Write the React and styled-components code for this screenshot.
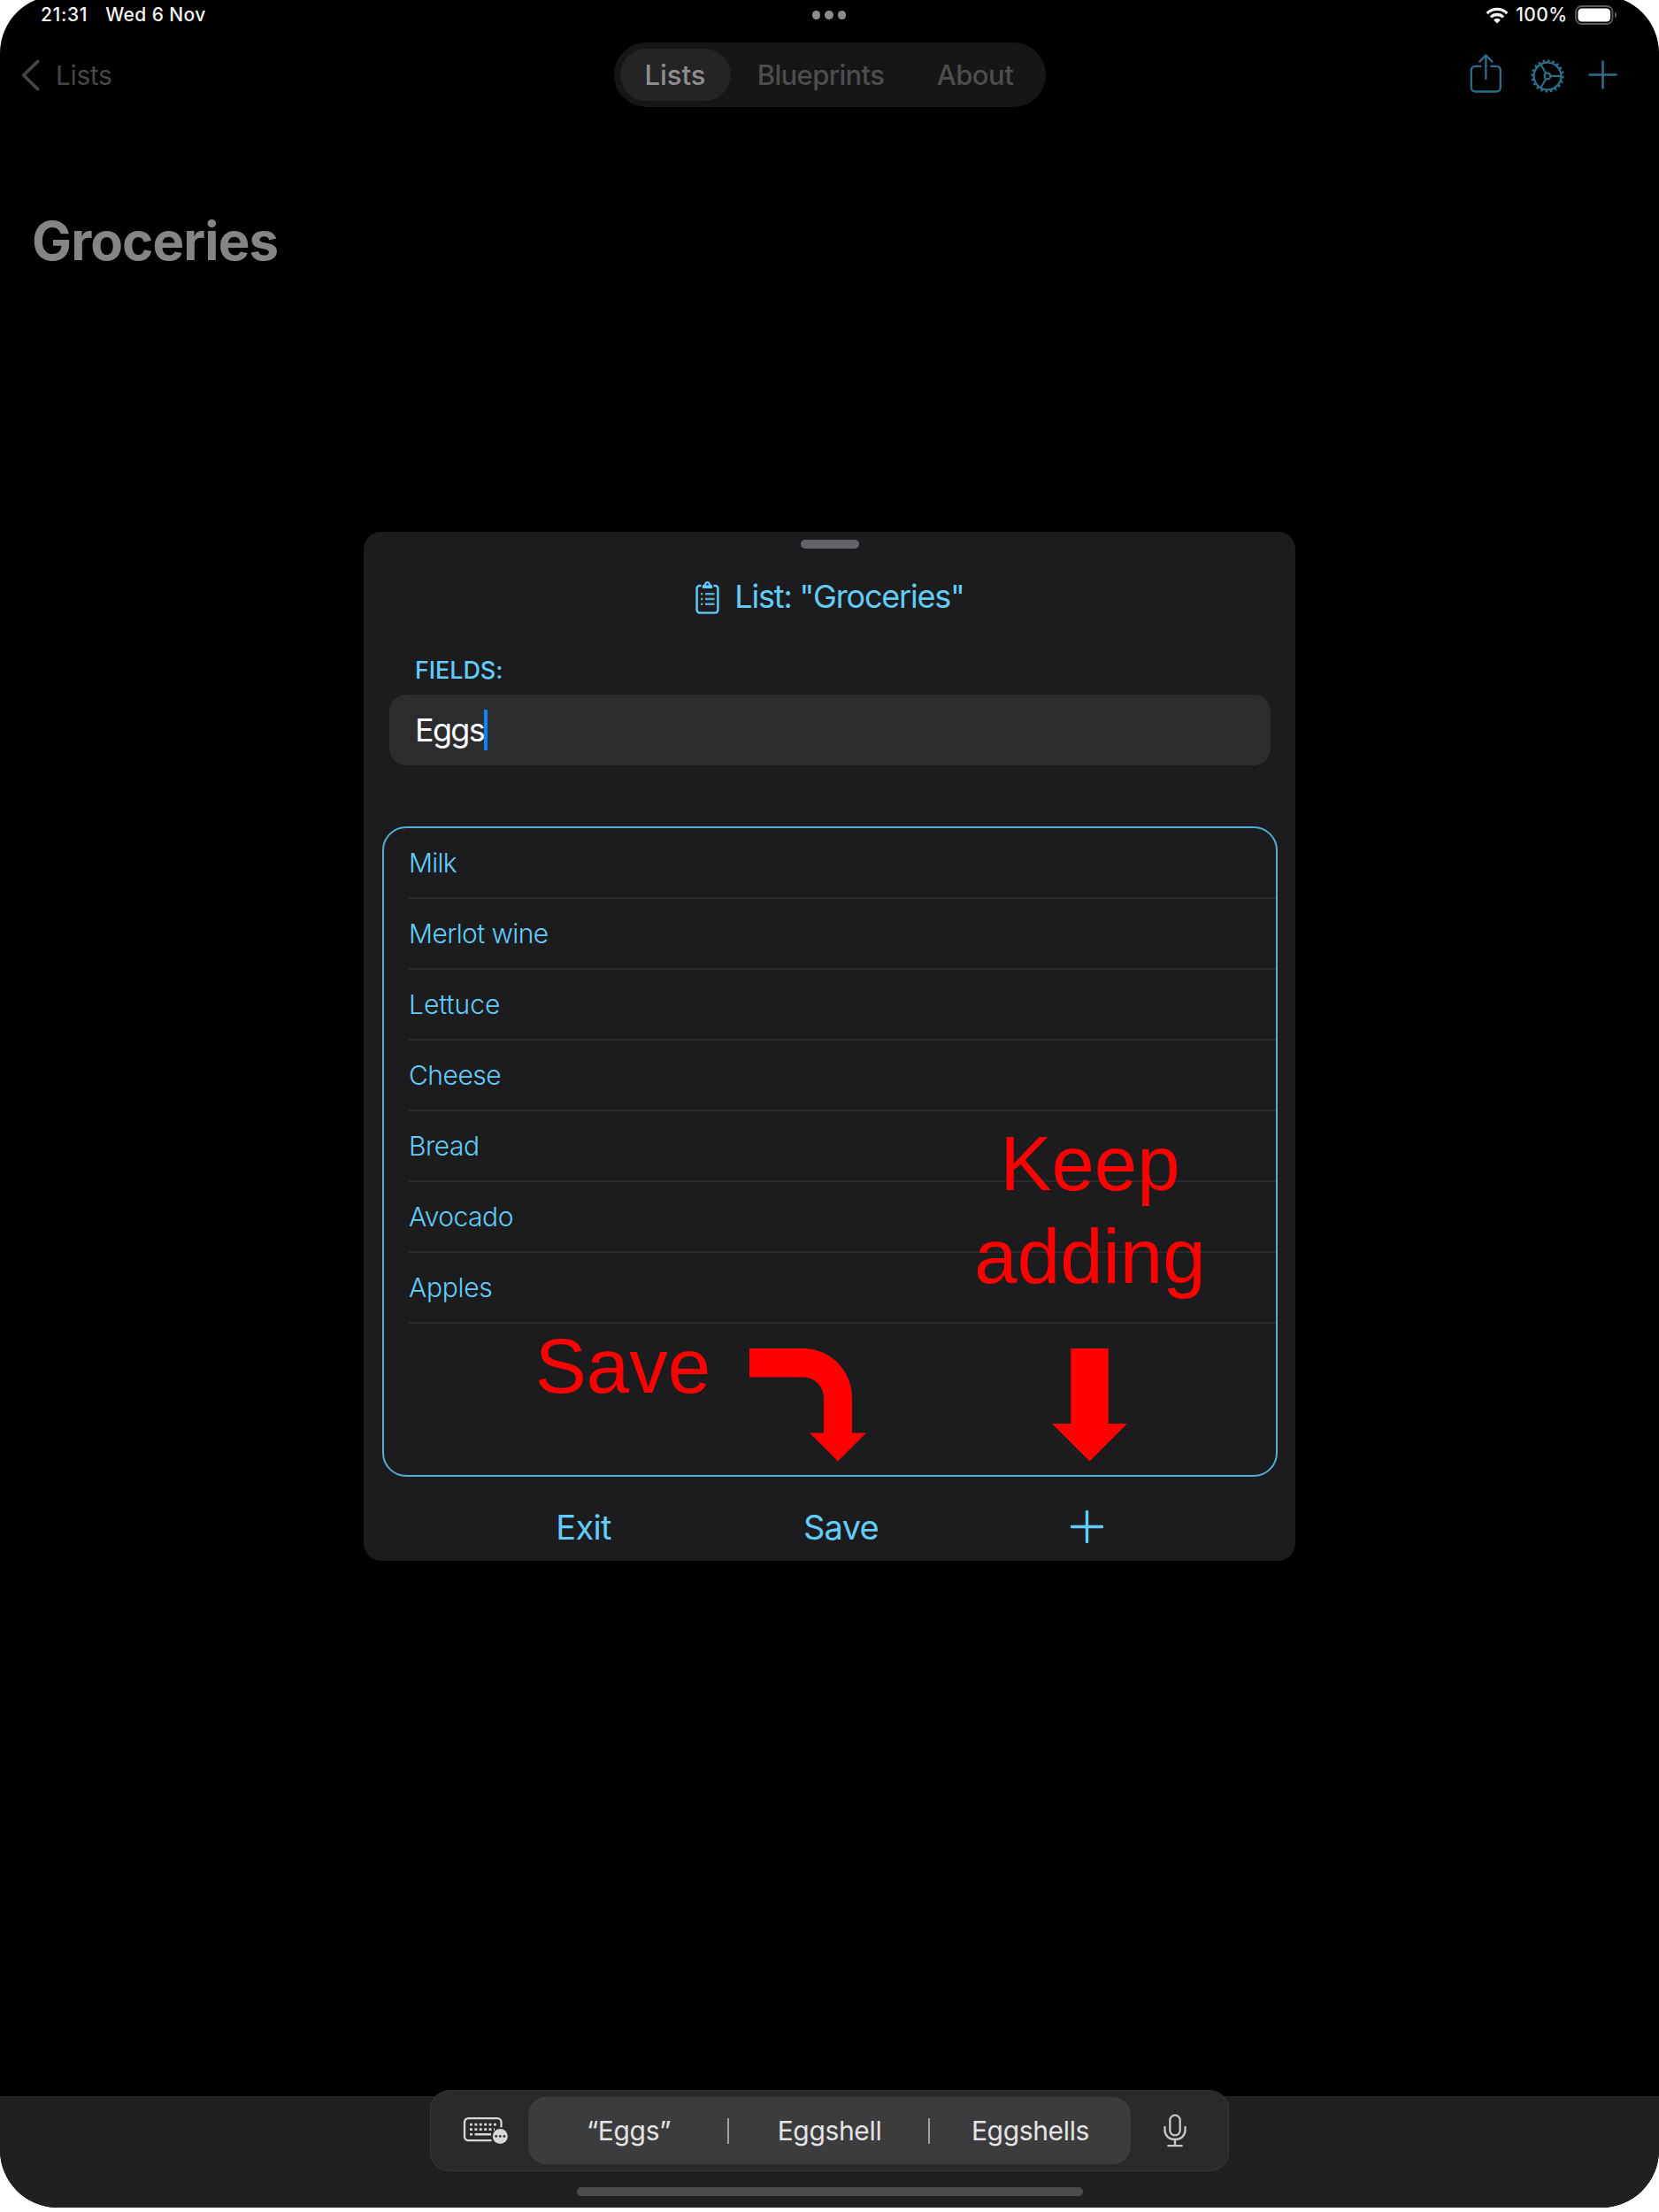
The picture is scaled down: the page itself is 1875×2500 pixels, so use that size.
import React from "react";
import styled, { createGlobalStyle } from "styled-components";

const CYAN = "#62cdfa";
const DIM_CYAN = "#2f6d88";

const GlobalStyle = createGlobalStyle`
  *, *::before, *::after { box-sizing: border-box; }
  body {
    margin: 0;
    background: #fff;
    font-family: Inter, Roboto, sans-serif;
  }
`;

const Page = styled.div`
  width: 1875px;
  height: 2500px;
  overflow: hidden;
  background: #fff;
`;

const Device = styled.div`
  width: 1875px;
  height: 2500px;
  margin-top: -5px;
  padding-top: 5px;
  border-radius: 65px;
  overflow: hidden;
  background: #000;
  display: flex;
  flex-direction: column;
`;

const StatusBar = styled.div`
  display: grid;
  grid-template-columns: 1fr auto 1fr;
  align-items: center;
  height: 34px;
  padding: 0 47.5px 0 46px;
`;

const StatusGroup = styled.div`
  display: flex;
  align-items: center;
  justify-content: ${(p) => (p.$end ? "flex-end" : "flex-start")};
  gap: ${(p) => p.$gap}px;
`;

const StatusText = styled.span`
  font-size: 21px;
  font-weight: 500;
  line-height: 26px;
  letter-spacing: ${(p) => p.$track || 0}px;
  color: #f4f4f4;
  white-space: nowrap;
`;

const Dots = styled.div`
  display: flex;
  gap: 5px;
`;

const Dot = styled.i`
  width: 9.5px;
  height: 9.5px;
  border-radius: 50%;
  background: #8c8c8c;
`;

const NavBar = styled.nav`
  display: grid;
  grid-template-columns: 1fr auto 1fr;
  align-items: center;
  height: 101px;
  padding: 0 23px;
`;

const BackLink = styled.div`
  display: flex;
  align-items: center;
  gap: 16px;
  font-size: 30px;
  line-height: 40px;
  letter-spacing: -0.4px;
  color: #464647;
`;

const Tabs = styled.div`
  display: flex;
  align-items: center;
  width: 488px;
  height: 73px;
  padding: 0 7px;
  border-radius: 37px;
  background: #161617;
`;

const Tab = styled.div`
  display: flex;
  align-items: center;
  justify-content: center;
  width: ${(p) => p.$width}px;
  height: 59px;
  border-radius: 30px;
  font-size: 31px;
  font-weight: 500;
  letter-spacing: ${(p) => p.$track || 0}px;
  color: ${(p) => (p.$active ? "#8e8e8f" : "#4d4d4f")};
  background: ${(p) => (p.$active ? "#242426" : "transparent")};
`;

const NavActions = styled.div`
  display: flex;
  align-items: flex-start;
  justify-content: flex-end;
  height: 47px;
  padding-right: 24px;
`;

const NavIcon = styled.span`
  display: flex;
  margin-left: ${(p) => p.$gap || 0}px;
  padding-top: ${(p) => p.$drop || 0}px;
`;

const PageTitle = styled.h1`
  margin: 101px 0 0 36px;
  font-size: 60px;
  line-height: 72px;
  font-weight: 700;
  letter-spacing: -0.9px;
  color: #858585;
`;

const Sheet = styled.section`
  align-self: center;
  flex: none;
  display: flex;
  flex-direction: column;
  width: 1053px;
  height: 1163px;
  margin-top: 293px;
  padding: 9px 20.5px 0 21px;
  border-radius: 20px;
  background: #1c1c1e;
`;

const Grabber = styled.div`
  align-self: center;
  flex: none;
  width: 66px;
  height: 9.5px;
  border-radius: 5px;
  background: #646468;
`;

const SheetTitle = styled.h2`
  display: flex;
  align-items: center;
  justify-content: center;
  gap: 17.5px;
  height: 40px;
  margin: 34.5px 0 0;
  font-size: 36px;
  font-weight: 400;
  letter-spacing: -1.2px;
  color: ${CYAN};
`;

const FieldLabel = styled.label`
  height: 30px;
  margin: 49px 0 0 37px;
  font-size: 27px;
  line-height: 30px;
  font-weight: 500;
  letter-spacing: -0.1px;
  color: ${CYAN};
`;

const Field = styled.div`
  flex: none;
  display: flex;
  align-items: center;
  height: 80px;
  margin: 12px 8px 0;
  padding-left: 29px;
  border-radius: 19px;
  background: #2c2c2e;
  font-size: 36px;
  letter-spacing: -1.7px;
  color: #fff;
`;

const Caret = styled.i`
  width: 3.5px;
  height: 46px;
  border-radius: 1px;
  background: #0a84ff;
`;

const ListBox = styled.div`
  position: relative;
  flex: none;
  height: 735px;
  margin-top: 69px;
  padding-left: 28px;
  border: 2px solid #53aed6;
  border-radius: 27px;
`;

const ListRow = styled.div`
  display: flex;
  align-items: center;
  height: 80px;
  border-bottom: 2px solid #29292b;
  font-size: 30px;
  font-weight: 300;
  letter-spacing: ${(p) => p.$track}px;
  color: ${CYAN};
`;

const Note = styled.div`
  position: absolute;
  left: ${(p) => p.$x}px;
  top: ${(p) => p.$y}px;
  width: ${(p) => p.$width}px;
  font-family: "Liberation Sans", Arial, sans-serif;
  font-size: 87px;
  line-height: 105px;
  text-align: center;
  color: #f00;
`;

const NoteArrow = styled.svg`
  position: absolute;
  left: ${(p) => p.$x}px;
  top: 587.5px;
  fill: #f00;
`;

const SheetFooter = styled.div`
  flex: 1;
  display: flex;
  align-items: center;
  padding-top: 18px;
`;

const FooterButton = styled.div`
  display: flex;
  align-items: center;
  justify-content: center;
  width: ${(p) => p.$width}px;
  margin-left: ${(p) => p.$gap}px;
  font-size: 38px;
  letter-spacing: -0.7px;
  color: ${CYAN};
`;

const KeyboardDock = styled.div`
  flex: none;
  height: 126px;
  margin-top: auto;
  background: #202020;
  display: flex;
  flex-direction: column;
  align-items: center;
`;

const Suggestions = styled.div`
  flex: none;
  display: flex;
  align-items: center;
  width: 903px;
  height: 92px;
  margin-top: -7px;
  border: 1px solid #383838;
  border-top-color: #2f2f2f;
  border-radius: 22px;
  background: #2a2a2a;
`;

const DockIcon = styled.div`
  display: flex;
  align-items: center;
  justify-content: center;
  width: ${(p) => p.$width}px;
  padding-left: ${(p) => p.$inset || 0}px;
`;

const Words = styled.div`
  display: flex;
  align-items: center;
  width: 681px;
  height: 76px;
  border-radius: 20px;
  background: #3c3c3e;
`;

const Word = styled.div`
  flex: 1;
  text-align: center;
  font-size: 30px;
  letter-spacing: -0.35px;
  color: #e4e4e4;
`;

const Divider = styled.i`
  width: 2px;
  height: 29px;
  margin: 0 0 0 -2px;
  background: #a0a0a2;
`;

const HomeIndicator = styled.div`
  width: 572px;
  height: 10px;
  margin-top: 17.5px;
  border-radius: 5px;
  background: #4c4c4c;
`;

const WifiIcon = () => (
  <svg width="26" height="19" viewBox="0 0 26 19" fill="none" stroke="#f4f4f4" strokeWidth="3.3">
    <path d="M1.6 7.1a16.2 16.2 0 0 1 22.8 0" />
    <path d="M5.9 11.4a10.1 10.1 0 0 1 14.2 0" />
    <path d="M13 18.4l-3.9-4a5.6 5.6 0 0 1 7.8 0z" fill="#f4f4f4" stroke="none" />
  </svg>
);

const BatteryIcon = () => (
  <svg width="48" height="22" viewBox="0 0 48 22" fill="none">
    <rect x="1" y="1" width="41.5" height="20" rx="6.5" stroke="#5c5c5c" strokeWidth="1.8" />
    <rect x="3.4" y="3.4" width="36.7" height="15.2" rx="4.4" fill="#fff" />
    <path d="M45 7.5c3 1.6 3 5.4 0 7z" fill="#5c5c5c" />
  </svg>
);

const ShareIcon = () => (
  <svg width="36" height="44" viewBox="0 0 36 44" fill="none" stroke={DIM_CYAN} strokeWidth="2.3" strokeLinecap="round" strokeLinejoin="round">
    <path d="M12.3 13.8H6.2a4.4 4.4 0 0 0-4.4 4.4v19.9a4.4 4.4 0 0 0 4.4 4.4h24.2a4.4 4.4 0 0 0 4.4-4.4V18.2a4.4 4.4 0 0 0-4.4-4.4h-6.1" />
    <path d="M18.3 28V2" />
    <path d="M11.3 8.6l7-7.1 7 7.1" />
  </svg>
);

const GearIcon = () => (
  <svg width="38" height="38" viewBox="0 0 38 38" fill="none" stroke={DIM_CYAN}>
    <circle cx="19" cy="19" r="15.4" strokeWidth="2.3" />
    <circle cx="19" cy="19" r="17.2" strokeWidth="2.8" pathLength="40" strokeDasharray="0.95 1.05" />
    <circle cx="19" cy="19" r="3.4" strokeWidth="2.2" />
    <path d="M22.4 19H34M17.3 16l-5.9-10.2M17.3 22l-5.9 10.2" strokeWidth="2.2" />
  </svg>
);

const PlusIcon = ({ size, color, stroke }) => (
  <svg width={size} height={size} viewBox={`0 0 ${size} ${size}`} stroke={color} strokeWidth={stroke} strokeLinecap="round">
    <path d={`M${size / 2} 1.5V${size - 1.5}M1.5 ${size / 2}H${size - 1.5}`} />
  </svg>
);

const BackChevron = () => (
  <svg width="24" height="38" viewBox="0 0 24 38" fill="none" stroke="#464647" strokeWidth="3.6" strokeLinecap="round" strokeLinejoin="round">
    <path d="M19.7 3.4L3.6 19l16.1 15.6" />
  </svg>
);

const ClipboardIcon = () => (
  <svg width="27" height="40" viewBox="0 0 27 40" fill="none" stroke={CYAN} strokeWidth="2.4">
    <path d="M6.5 8H4.6a3 3 0 0 0-3 3v24.6a3 3 0 0 0 3 3h17.8a3 3 0 0 0 3-3V11a3 3 0 0 0-3-3h-1.9" />
    <path d="M7.9 11V8.4c0-1.3.8-1.9 2.1-2 .4-2.1 1.7-3.5 3.5-3.5s3.1 1.4 3.5 3.5c1.3.1 2.1.7 2.1 2V11z" fill={CYAN} stroke="none" />
    <circle cx="13.5" cy="6.4" r="1.2" fill="#1c1c1e" stroke="none" />
    <path d="M11 17.3h10.5M11 23h10.5M11 28.7h10.5M6 17.3h2.3M6 23h2.3M6 28.7h2.3" strokeWidth="2.5" opacity="0.8" />
  </svg>
);

const KeyboardIcon = () => (
  <svg width="52" height="32" viewBox="0 0 52 32" fill="none" stroke="#d8d8d8">
    <path d="M32.5 27.2H6.3a4.3 4.3 0 0 1-4.3-4.3V6.4a4.3 4.3 0 0 1 4.3-4.3h32.9a4.3 4.3 0 0 1 4.3 4.3v5.8" strokeWidth="2.3" />
    <path d="M8 9.2h31M8 14.6h28" strokeWidth="2.8" strokeDasharray="2.9 2.5" />
    <path d="M8 20.2h2.9M13.5 20.2h18.5" strokeWidth="2.5" />
    <circle cx="42.3" cy="22.4" r="8.5" fill="#d8d8d8" stroke="none" />
    <g fill="#333" stroke="none">
      <circle cx="37.7" cy="22.4" r="1.4" />
      <circle cx="42.3" cy="22.4" r="1.4" />
      <circle cx="46.9" cy="22.4" r="1.4" />
    </g>
  </svg>
);

const MicIcon = () => (
  <svg width="26" height="38" viewBox="0 0 26 38" fill="none" stroke="#c8c8c8" strokeWidth="2.3" strokeLinecap="round">
    <rect x="7.3" y="1.6" width="11.4" height="22.8" rx="5.7" />
    <path d="M1.5 15v3.2C1.5 24.7 6.4 29 13 29s11.5-4.3 11.5-10.8V15" />
    <path d="M13 29v6.8M5.3 36.2h15.4" />
  </svg>
);

const items = [
  { name: "Milk", track: -0.75 },
  { name: "Merlot wine", track: -0.6 },
  { name: "Lettuce", track: 0 },
  { name: "Cheese", track: -0.5 },
  { name: "Bread", track: -0.5 },
  { name: "Avocado", track: -0.5 },
  { name: "Apples", track: -0.3 },
];

export default function App() {
  return (
    <Page>
      <GlobalStyle />
      <Device>
        <StatusBar>
          <StatusGroup $gap={20}>
            <StatusText $track={0.65}>21:31</StatusText>
            <StatusText $track={0.4}>Wed 6 Nov</StatusText>
          </StatusGroup>
          <Dots>
            <Dot />
            <Dot />
            <Dot />
          </Dots>
          <StatusGroup $gap={8} $end>
            <WifiIcon />
            <StatusText $track={0.4}>100%</StatusText>
            <BatteryIcon />
          </StatusGroup>
        </StatusBar>

        <NavBar>
          <BackLink>
            <BackChevron />
            Lists
          </BackLink>
          <Tabs>
            <Tab $active $width={125}>Lists</Tab>
            <Tab $width={204} $track={-0.65}>Blueprints</Tab>
            <Tab $width={145} $track={-0.5}>About</Tab>
          </Tabs>
          <NavActions>
            <NavIcon><ShareIcon /></NavIcon>
            <NavIcon $gap={33} $drop={6}><GearIcon /></NavIcon>
            <NavIcon $gap={27} $drop={7}><PlusIcon size={33} color={DIM_CYAN} stroke={2.6} /></NavIcon>
          </NavActions>
        </NavBar>

        <PageTitle>Groceries</PageTitle>

        <Sheet>
          <Grabber />
          <SheetTitle>
            <ClipboardIcon />
            List: "Groceries"
          </SheetTitle>
          <FieldLabel>FIELDS:</FieldLabel>
          <Field>
            Eggs
            <Caret />
          </Field>
          <ListBox>
            {items.map(({ name, track }) => (
              <ListRow key={name} $track={track}>{name}</ListRow>
            ))}
            <Note $x={160} $y={555} $width={220}>Save</Note>
            <Note $x={648} $y={326} $width={300}>
              Keep
              <br />
              adding
            </Note>
            <NoteArrow $x={413} width="132" height="128" viewBox="0 0 132 128">
              <path d="M0 0H61A55 56 0 0 1 116 56V95.5H132L100 127.5L68 95.5H84V56A23 23.5 0 0 0 61 32.5H0Z" />
            </NoteArrow>
            <NoteArrow $x={755} width="85" height="128" viewBox="0 0 85 128">
              <path d="M21.3 0H63.7V85H85L42.5 127.5L0 85H21.3Z" />
            </NoteArrow>
          </ListBox>
          <SheetFooter>
            <FooterButton $width={120} $gap={167.5}>Exit</FooterButton>
            <FooterButton $width={140} $gap={161}>Save</FooterButton>
            <FooterButton $width={60} $gap={177.5}><PlusIcon size={37} color={CYAN} stroke={3.4} /></FooterButton>
          </SheetFooter>
        </Sheet>

        <KeyboardDock>
          <Suggestions>
            <DockIcon $width={110} $inset={14}><KeyboardIcon /></DockIcon>
            <Words>
              <Word>“Eggs”</Word>
              <Divider />
              <Word>Eggshell</Word>
              <Divider />
              <Word>Eggshells</Word>
            </Words>
            <DockIcon $width={100}><MicIcon /></DockIcon>
          </Suggestions>
          <HomeIndicator />
        </KeyboardDock>
      </Device>
    </Page>
  );
}
